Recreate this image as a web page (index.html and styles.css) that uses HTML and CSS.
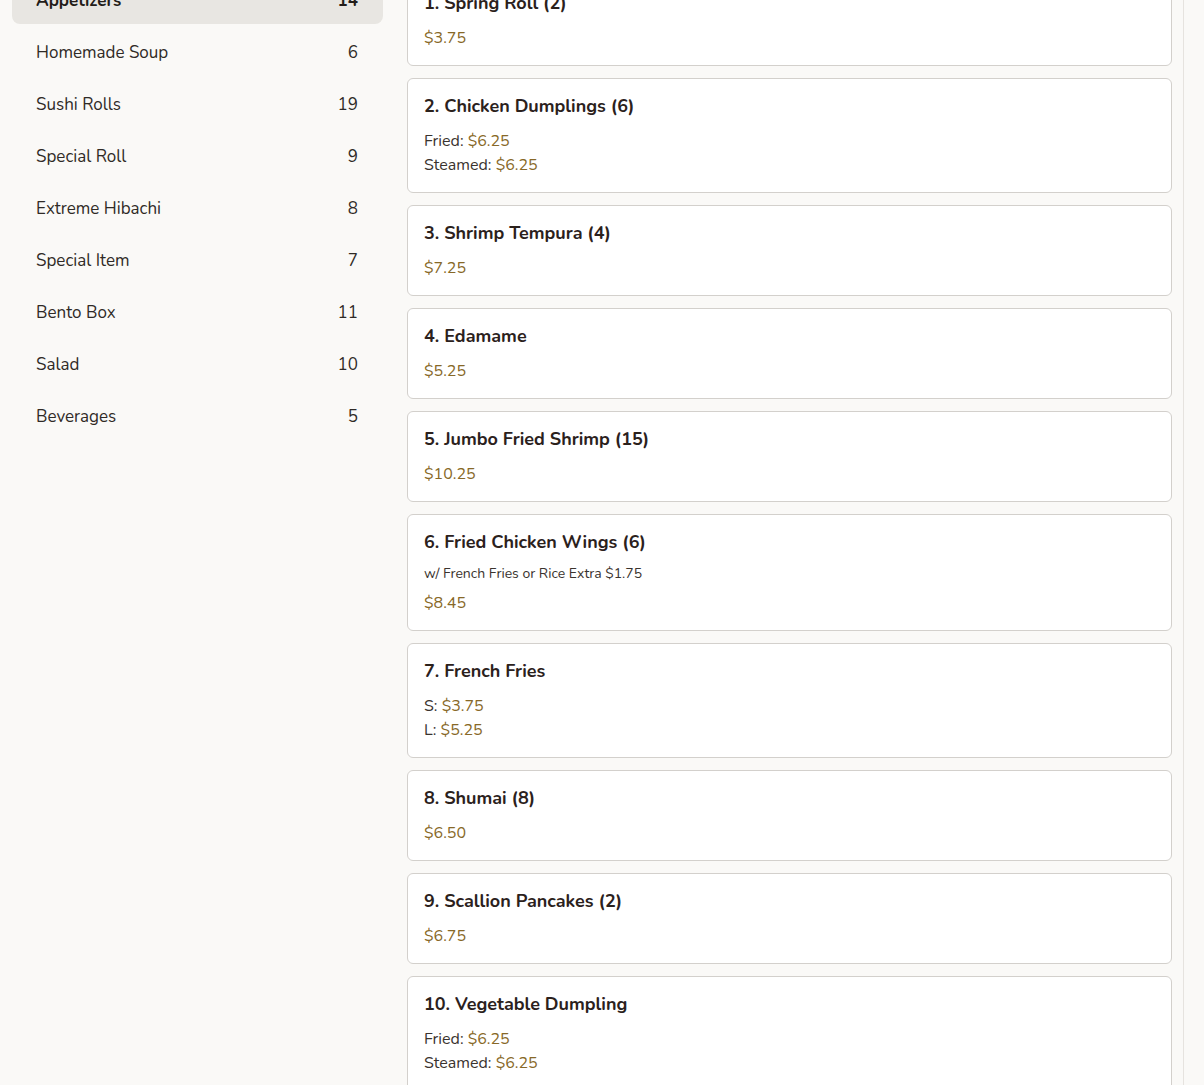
FILE: index.html
```html
<!DOCTYPE html>
<html lang="en">
<head>
<meta charset="utf-8">
<title>Menu</title>
<link rel="stylesheet" href="styles.css">
</head>
<body>
<div class="page">
  <aside class="sidebar">
    <div class="cat active"><span>Appetizers</span><span>14</span></div>
    <div class="cat"><span>Homemade Soup</span><span>6</span></div>
    <div class="cat"><span>Sushi Rolls</span><span>19</span></div>
    <div class="cat"><span>Special Roll</span><span>9</span></div>
    <div class="cat"><span>Extreme Hibachi</span><span>8</span></div>
    <div class="cat"><span>Special Item</span><span>7</span></div>
    <div class="cat"><span>Bento Box</span><span>11</span></div>
    <div class="cat"><span>Salad</span><span>10</span></div>
    <div class="cat"><span>Beverages</span><span>5</span></div>
  </aside>
  <main class="items">
    <div class="card">
      <div class="title">1. Spring Roll (2)</div>
      <div class="price">$3.75</div>
    </div>
    <div class="card">
      <div class="title">2. Chicken Dumplings (6)</div>
      <div class="line">Fried: <span class="price">$6.25</span></div>
      <div class="line">Steamed: <span class="price">$6.25</span></div>
    </div>
    <div class="card">
      <div class="title">3. Shrimp Tempura (4)</div>
      <div class="price">$7.25</div>
    </div>
    <div class="card">
      <div class="title">4. Edamame</div>
      <div class="price">$5.25</div>
    </div>
    <div class="card">
      <div class="title">5. Jumbo Fried Shrimp (15)</div>
      <div class="price">$10.25</div>
    </div>
    <div class="card">
      <div class="title">6. Fried Chicken Wings (6)</div>
      <div class="note">w/ French Fries or Rice Extra $1.75</div>
      <div class="price">$8.45</div>
    </div>
    <div class="card">
      <div class="title">7. French Fries</div>
      <div class="line">S: <span class="price">$3.75</span></div>
      <div class="line">L: <span class="price">$5.25</span></div>
    </div>
    <div class="card">
      <div class="title">8. Shumai (8)</div>
      <div class="price">$6.50</div>
    </div>
    <div class="card">
      <div class="title">9. Scallion Pancakes (2)</div>
      <div class="price">$6.75</div>
    </div>
    <div class="card">
      <div class="title">10. Vegetable Dumpling</div>
      <div class="line">Fried: <span class="price">$6.25</span></div>
      <div class="line">Steamed: <span class="price">$6.25</span></div>
    </div>
  </main>
</div>
</body>
</html>
```

FILE: styles.css
```css
html, body {
  margin: 0;
  padding: 0;
  background: #faf9f7;
  font-family: "Nunito", "Lato", "Noto Sans", sans-serif;
  color: #2b2622;
  overflow: hidden;
  height: 1085px;
}

.page {
  display: flex;
  align-items: flex-start;
  gap: 24px;
  padding: 0 20px 0 12px;
  margin-top: -24px;
}

.sidebar {
  width: 371px;
  flex: none;
  display: flex;
  flex-direction: column;
  gap: 4px;
}

.cat {
  height: 48px;
  display: flex;
  align-items: center;
  justify-content: space-between;
  padding: 0 25px 0 24px;
  font-size: 17px;
  color: #2f2a26;
  border-radius: 8px;
}

.cat.active {
  background: #e8e6e2;
  font-weight: 700;
  color: #231d19;
}

.items {
  flex: 1;
  display: flex;
  flex-direction: column;
  gap: 12px;
  margin-top: -1px;
  padding-right: 11px;
  border-right: 1px solid #e6e3df;
  min-height: 1200px;
}

.card {
  background: #ffffff;
  border: 1px solid #d3d0cc;
  border-radius: 6px;
  padding: 17px 16px 15px;
}

.title {
  font-size: 18px;
  font-weight: 700;
  line-height: 20px;
  color: #2b211c;
  margin-bottom: 13px;
}

.note {
  font-size: 14px;
  line-height: 18px;
  color: #3a332e;
  margin-top: 0;
  margin-bottom: 8px;
}

.line {
  font-size: 16px;
  line-height: 24px;
  color: #3a332e;
}

.price {
  font-size: 16px;
  line-height: 24px;
  color: #876827;
}
```
